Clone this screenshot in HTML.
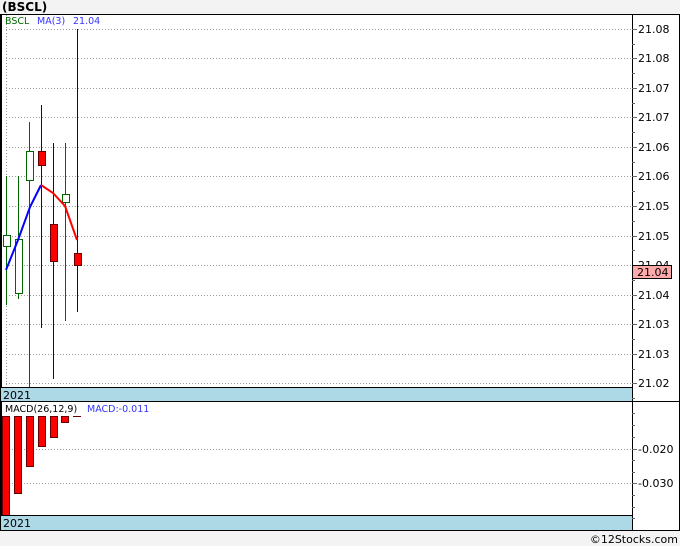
<!DOCTYPE html>
<html><head><style>
html,body{margin:0;padding:0;background:#f3f3f3;}
svg{display:block;font-family:"DejaVu Sans","Liberation Sans",sans-serif;}
</style></head><body>
<svg width="680" height="546" xmlns="http://www.w3.org/2000/svg">
<rect width="680" height="546" fill="#f3f3f3"/>
<text x="2" y="11" font-size="12" font-weight="bold" fill="#000">(BSCL)</text>
<rect x="0.5" y="14.5" width="679" height="516" fill="#fff" stroke="#000"/>
<g stroke="#999" stroke-dasharray="1,2" stroke-width="1">
<line x1="6" y1="29.5" x2="632" y2="29.5"/><line x1="6" y1="58.5" x2="632" y2="58.5"/>
<line x1="6" y1="88.5" x2="632" y2="88.5"/><line x1="6" y1="117.5" x2="632" y2="117.5"/>
<line x1="6" y1="147.5" x2="632" y2="147.5"/><line x1="6" y1="176.5" x2="632" y2="176.5"/>
<line x1="6" y1="206.5" x2="632" y2="206.5"/><line x1="6" y1="236.5" x2="632" y2="236.5"/>
<line x1="6" y1="265.5" x2="632" y2="265.5"/><line x1="6" y1="295.5" x2="632" y2="295.5"/>
<line x1="6" y1="324.5" x2="632" y2="324.5"/><line x1="6" y1="354.5" x2="632" y2="354.5"/>
<line x1="6" y1="383.5" x2="632" y2="383.5"/>
<line x1="6.5" y1="15" x2="6.5" y2="387"/>
<line x1="6" y1="449.5" x2="632" y2="449.5"/><line x1="6" y1="483.5" x2="632" y2="483.5"/>
</g>
<line x1="1" y1="14" x2="1" y2="531" stroke="#000" stroke-width="2"/>
<text x="5" y="24" font-size="9.5" fill="#006600">BSCL</text>
<text x="37" y="24" font-size="9.5" fill="#3333ff">MA(3)</text>
<text x="73" y="24" font-size="9.5" fill="#3333ff">21.04</text>
<!-- candles -->
<g stroke-width="1">
<line x1="6.5" y1="176" x2="6.5" y2="305" stroke="#006600"/>
<rect x="3.5" y="235.5" width="7" height="11" fill="#fff" stroke="#006600"/>
<line x1="18.5" y1="176" x2="18.5" y2="299" stroke="#006600"/>
<rect x="15.5" y="239.5" width="7" height="54" fill="#fff" stroke="#006600"/>
<line x1="29.5" y1="122" x2="29.5" y2="387" stroke="#006600"/>
<rect x="26.5" y="151.5" width="7" height="29" fill="#fff" stroke="#006600"/>
<line x1="41.5" y1="105" x2="41.5" y2="328" stroke="#440000"/>
<rect x="38.5" y="151.5" width="7" height="14" fill="#ff0000" stroke="#660000"/>
<line x1="53.5" y1="143" x2="53.5" y2="379" stroke="#440000"/>
<rect x="50.5" y="224.5" width="7" height="37" fill="#ff0000" stroke="#660000"/>
<line x1="65.5" y1="143" x2="65.5" y2="321" stroke="#006600"/>
<rect x="62.5" y="194.5" width="7" height="8" fill="#fff" stroke="#006600"/>
<line x1="77.5" y1="29" x2="77.5" y2="312" stroke="#440000"/>
<rect x="74.5" y="253.5" width="7" height="12" fill="#ff0000" stroke="#660000"/>
</g>
<polyline points="6,270 18,240 30,207 41,185" fill="none" stroke="#0000ff" stroke-width="2"/>
<polyline points="41,185 53,193 65,206 77,240" fill="none" stroke="#ff0000" stroke-width="2"/>
<!-- year bar -->
<rect x="1" y="387" width="631" height="14" fill="#add8e6"/>
<line x1="0" y1="387.5" x2="632" y2="387.5" stroke="#000"/>
<text x="3" y="399" font-size="11" fill="#000">2021</text>
<line x1="0" y1="401.5" x2="680" y2="401.5" stroke="#000"/>
<!-- axis -->
<line x1="632.5" y1="14" x2="632.5" y2="531" stroke="#000"/>
<g stroke="#666">
<line x1="632" y1="29.5" x2="637" y2="29.5"/><line x1="632" y1="44.5" x2="635" y2="44.5"/>
<line x1="632" y1="58.5" x2="637" y2="58.5"/><line x1="632" y1="73.5" x2="635" y2="73.5"/>
<line x1="632" y1="88.5" x2="637" y2="88.5"/><line x1="632" y1="103.5" x2="635" y2="103.5"/>
<line x1="632" y1="117.5" x2="637" y2="117.5"/><line x1="632" y1="132.5" x2="635" y2="132.5"/>
<line x1="632" y1="147.5" x2="637" y2="147.5"/><line x1="632" y1="162.5" x2="635" y2="162.5"/>
<line x1="632" y1="176.5" x2="637" y2="176.5"/><line x1="632" y1="191.5" x2="635" y2="191.5"/>
<line x1="632" y1="206.5" x2="637" y2="206.5"/><line x1="632" y1="221.5" x2="635" y2="221.5"/>
<line x1="632" y1="236.5" x2="637" y2="236.5"/><line x1="632" y1="250.5" x2="635" y2="250.5"/>
<line x1="632" y1="280.5" x2="635" y2="280.5"/>
<line x1="632" y1="295.5" x2="637" y2="295.5"/><line x1="632" y1="309.5" x2="635" y2="309.5"/>
<line x1="632" y1="324.5" x2="637" y2="324.5"/><line x1="632" y1="339.5" x2="635" y2="339.5"/>
<line x1="632" y1="354.5" x2="637" y2="354.5"/><line x1="632" y1="369.5" x2="635" y2="369.5"/>
<line x1="632" y1="383.5" x2="637" y2="383.5"/><line x1="632" y1="398.5" x2="635" y2="398.5"/>
<line x1="632" y1="413.5" x2="635" y2="413.5"/><line x1="632" y1="425.5" x2="635" y2="425.5"/>
<line x1="632" y1="437.5" x2="635" y2="437.5"/><line x1="632" y1="449.5" x2="637" y2="449.5"/>
<line x1="632" y1="460.5" x2="635" y2="460.5"/><line x1="632" y1="472.5" x2="635" y2="472.5"/>
<line x1="632" y1="483.5" x2="637" y2="483.5"/><line x1="632" y1="495.5" x2="635" y2="495.5"/>
<line x1="632" y1="507.5" x2="635" y2="507.5"/><line x1="632" y1="518.5" x2="635" y2="518.5"/>
</g>
<g font-size="11" fill="#000">
<text x="638" y="33">21.08</text><text x="638" y="62">21.08</text>
<text x="638" y="92">21.07</text><text x="638" y="121">21.07</text>
<text x="638" y="151">21.06</text><text x="638" y="180">21.06</text>
<text x="638" y="210">21.05</text><text x="638" y="240">21.05</text>
<text x="638" y="269">21.04</text><text x="638" y="299">21.04</text>
<text x="638" y="328">21.03</text><text x="638" y="358">21.03</text>
<text x="638" y="387">21.02</text>
<text x="638" y="453">-0.020</text><text x="638" y="487">-0.030</text>
</g>
<rect x="632.5" y="265.5" width="39" height="13" fill="#ffaaaa" stroke="#000"/>
<text x="637" y="276" font-size="11" fill="#000">21.04</text>
<!-- MACD -->
<text x="5" y="412" font-size="9.5" fill="#000">MACD(26,12,9)</text>
<text x="87" y="412" font-size="9.5" fill="#3333ff">MACD:-0.011</text>
<g fill="#ff0000" stroke="#660000">
<rect x="2.5" y="416.5" width="7" height="99"/>
<rect x="14.5" y="416.5" width="7" height="77"/>
<rect x="26.5" y="416.5" width="7" height="50"/>
<rect x="38.5" y="416.5" width="7" height="30"/>
<rect x="50.5" y="416.5" width="7" height="21"/>
<rect x="61.5" y="416.5" width="7" height="6"/>
</g>
<line x1="73" y1="416.5" x2="81" y2="416.5" stroke="#660000"/>
<rect x="1" y="516" width="631" height="14" fill="#add8e6"/>
<line x1="0" y1="515.5" x2="632" y2="515.5" stroke="#000"/>
<text x="3" y="527" font-size="11" fill="#000">2021</text>
<line x1="0" y1="530.5" x2="680" y2="530.5" stroke="#000"/>
<text x="678" y="543" font-size="11" fill="#000" text-anchor="end">©12Stocks.com</text>
</svg>
</body></html>
